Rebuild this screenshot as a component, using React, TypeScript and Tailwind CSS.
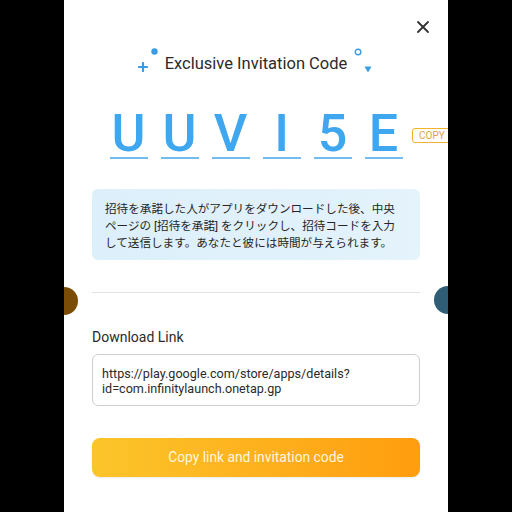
import { X } from "lucide-react"

const code = ["U", "U", "V", "I", "5", "E"]

export default function App() {
    return (
        <div className="w-[512px] h-[512px] bg-black flex justify-center overflow-hidden" style={{ fontFamily: "Roboto, 'Noto Sans CJK JP', sans-serif" }}>
            <div className="relative w-[384px] h-[512px] bg-white overflow-hidden flex flex-col px-[28px]">
                <button className="absolute top-[17px] right-[15px] text-[#333]">
                    <X size={20} strokeWidth={2.2} />
                </button>

                <div className="flex justify-center mt-[52px]">
                    <div className="relative">
                        <h1 className="text-[16.5px] leading-[24px] text-[#2b2b2b]">Exclusive Invitation Code</h1>
                        <Sparkles />
                    </div>
                </div>

                <div className="relative flex justify-center gap-[13px] mt-[34px]">
                    {code.map((c, i) => (
                        <div key={i} className="flex flex-col items-center w-[38px]">
                            <span className="text-[52px] leading-[48px] h-[48px] text-[#3fa6f0] font-medium">{c}</span>
                            <div className="w-[38px] h-[2px] bg-[#72bcf0] mt-[-1px]"></div>
                        </div>
                    ))}
                    <span className="absolute left-[320px] top-[18px] h-[15px] border border-[#f2b12e] rounded-[3px] pl-[6px] pr-[8px] text-[10px] leading-[13px] text-[#e3a23e] bg-white whitespace-nowrap">COPY</span>
                </div>

                <div className="mt-[30px] rounded-[6px] bg-gradient-to-r from-[#dceffa] to-[#e4f3fc] pl-[13px] pr-[8px] pt-[12px] pb-[8px] text-[11.6px] leading-[17px] text-[#262626]">
                    <p>招待を承諾した人がアプリをダウンロードした後、中央</p>
                    <p>ページの [招待を承諾] をクリックし、招待コードを入力</p>
                    <p>して送信します。あなたと彼には時間が与えられます。</p>
                </div>

                <div className="h-px bg-[#e3e3e3] mt-[32px]"></div>

                <p className="mt-[35px] text-[14px] leading-[18px] text-[#2b2b2b]">Download Link</p>

                <div className="mt-[8px] h-[52px] border border-[#cfcfcf] rounded-[6px] pl-[9px] pt-[11px] text-[12.6px] leading-[15px] text-[#2b2b2b]">
                    <p>https://play.google.com/store/apps/details?</p>
                    <p>id=com.infinitylaunch.onetap.gp</p>
                </div>

                <button className="mt-[32px] h-[39px] rounded-[8px] bg-gradient-to-r from-[#fbc52a] to-[#ff9d0d] text-[13.8px] text-[#fff6df] shadow-[0_1px_2px_rgba(0,0,0,0.08)]">
                    Copy link and invitation code
                </button>

                <div className="absolute left-[-14px] top-[287px] w-[28px] h-[28px] rounded-full bg-[#7a4c05]"></div>
                <div className="absolute right-[-14px] top-[286px] w-[28px] h-[28px] rounded-full bg-[#2f5d76]"></div>
            </div>
        </div>
    )
}

function Sparkles() {
    return (
        <>
            <svg className="absolute left-[-27px] top-[10px]" width="10" height="10" viewBox="0 0 10 10">
                <path d="M5 1v8M1 5h8" stroke="#3a9be2" strokeWidth="2.2" strokeLinecap="round" />
            </svg>
            <svg className="absolute left-[-14px] top-[-4px]" width="7" height="7" viewBox="0 0 7 7">
                <circle cx="3.5" cy="3.5" r="3.2" fill="#3a9be2" />
            </svg>
            <svg className="absolute right-[-15px] top-[-4px]" width="8" height="8" viewBox="0 0 8 8">
                <circle cx="4" cy="4" r="2.8" fill="none" stroke="#3a9be2" strokeWidth="1.4" />
            </svg>
            <svg className="absolute right-[-25px] top-[14px]" width="8" height="7" viewBox="0 0 8 7">
                <path d="M0.5 0.5h7L4 6.5z" fill="#3a9be2" />
            </svg>
        </>
    )
}
